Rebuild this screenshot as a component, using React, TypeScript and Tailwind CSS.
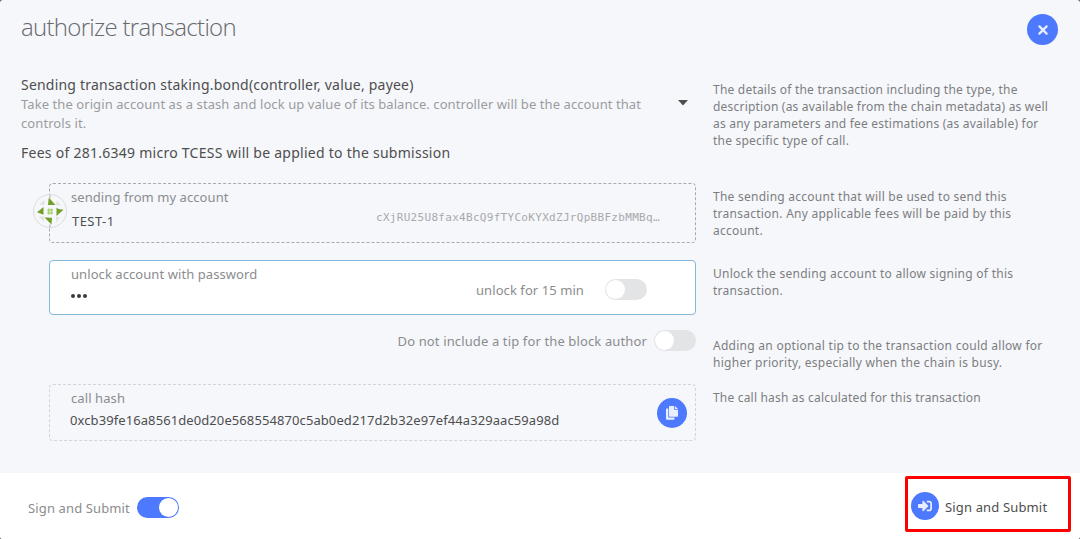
import type { ReactNode } from 'react';

function Toggle({ on = false }: { on?: boolean }) {
  return (
    <button
      type="button"
      role="switch"
      aria-checked={on}
      className={
        on
          ? 'flex h-[21px] w-[42px] shrink-0 items-center justify-end rounded-full bg-[#4d79ff] p-px'
          : 'flex h-[21px] w-[42px] shrink-0 items-center justify-start rounded-full bg-[#e3e4e6] p-px'
      }
    >
      <span className="size-[19px] rounded-full bg-white" />
    </button>
  );
}

function Help({ className, lines }: { className: string; lines: string[] }) {
  return (
    <div className={`ml-[17px] flex-1 whitespace-nowrap text-[12px] leading-[17px] text-[#7d7e80] ${className}`}>
      {lines.map((line) => (
        <div key={line}>{line}</div>
      ))}
    </div>
  );
}

function Row({ className, children }: { className: string; children: ReactNode }) {
  return <div className={`flex items-start ${className}`}>{children}</div>;
}

function Identicon() {
  return (
    <svg viewBox="0 0 34 34" className="absolute -left-[17px] top-[10px] size-[34px]">
      <circle cx="17" cy="17" r="16.5" fill="#f5f7fb" stroke="#dcdcdd" />
      <path d="M17 1v3M17 30.500v3" stroke="#a9aaac" />
      <g fill="#e1e5e1">
        <path d="M11.500 5.500v5.500L6.500 10.500zM28.500 11.500l-5.500-.5.500-4.500zM23 28.500v-6l4 1zM5.500 22.500h5.500L11 27.500z" />
      </g>
      <g fill="#739f2b">
        <path d="M15.800 3.500L22.500 11h-7.500zM30.500 15.800L23.500 22v-8.500l2 1.500zM18.500 30.500L11.500 23.500l7.500.200zM4 18.200L10.500 13v7.800z" />
      </g>
      <g fill="none" stroke="#a8d46f" strokeWidth="1.300">
        <path d="M15.700 14.500v6M18.500 14.500v6M14.300 16h5.600M14.300 19h5.600" />
      </g>
    </svg>
  );
}

export default function App() {
  return (
    <div className="h-[539px] w-[1080px] overflow-hidden bg-[#5e5e60]">
      <div className="flex h-full flex-col overflow-hidden rounded-[3px] bg-[#f5f7fb] font-['Noto_Sans',sans-serif] text-[#4e4e4e]">
        <header className="flex h-[72px] shrink-0 items-start justify-between pl-[21px] pr-[22px]">
          <h1 className="mt-[9px] whitespace-nowrap font-['Open_Sans',sans-serif] text-[24px] font-light leading-[36px] tracking-[-0.7px] text-[#68696b]">
            authorize transaction
          </h1>
          <button type="button" aria-label="Close" className="mt-[14px] flex size-[31px] items-center justify-center rounded-full bg-[#4d79ff]">
            <svg viewBox="0 0 12 12" className="size-[12px]" fill="none" stroke="#e8edff" strokeWidth="2.3" strokeLinecap="round">
              <path d="M2.400 2.400l7.200 7.200M9.600 2.400l-7.200 7.200" />
            </svg>
          </button>
        </header>

        <main className="h-[401px] shrink-0 pl-[21px]">
          <Row className="h-[111px]">
            <div className="w-[675px] shrink-0">
              <div className="flex justify-between">
                <div className="whitespace-nowrap pt-[3px]">
                  <div className="text-[14px] leading-[20px] tracking-[0.21px]">Sending transaction staking.bond(controller, value, payee)</div>
                  <div className="text-[13px] leading-[19px] tracking-[0.08px] text-[#9b9c9e]">
                    <div>Take the origin account as a stash and lock up value of its balance. controller will be the account that</div>
                    <div>controls it.</div>
                  </div>
                </div>
                <svg viewBox="0 0 10 6" className="mr-[8px] mt-[28px] h-[6px] w-[10px]" fill="#4e4e4e">
                  <path d="M0 0h10L5 5.500z" />
                </svg>
              </div>
              <div className="mt-[10px] whitespace-nowrap text-[14px] leading-[20px] tracking-[0.26px]">
                Fees of 281.6349 micro TCESS will be applied to the submission
              </div>
            </div>
            <Help
              className="pt-[9px] tracking-[0.21px]"
              lines={[
                'The details of the transaction including the type, the',
                'description (as available from the chain metadata) as well',
                'as any parameters and fee estimations (as available) for',
                'the specific type of call.',
              ]}
            />
          </Row>

          <Row className="h-[77px]">
            <section className="relative ml-[28px] h-[60px] w-[647px] shrink-0 rounded-[4px] border border-dashed border-[#a9aaac] pl-[21px]">
              <Identicon />
              <div className="mt-[3px] whitespace-nowrap text-[13px] leading-[20px] tracking-[0.07px] text-[#8b8c8e]">sending from my account</div>
              <div className="mt-[4px] flex items-center whitespace-nowrap leading-[20px]">
                <span className="ml-px w-[304px] text-[13px] tracking-[0.45px]">TEST-1</span>
                <span className="-mt-[6px] font-['DejaVu_Sans_Mono',monospace] text-[11px] tracking-[0.3px] text-[#a8a9ab]">
                  cXjRU25U8fax4BcQ9fTYCoKYXdZJrQpBBFzbMMBq…
                </span>
              </div>
            </section>
            <Help
              className="pt-[5px] tracking-[0.25px]"
              lines={[
                'The sending account that will be used to send this',
                'transaction. Any applicable fees will be paid by this',
                'account.',
              ]}
            />
          </Row>

          <Row className="h-[70px]">
            <section className="ml-[28px] flex h-[55px] w-[647px] shrink-0 rounded-[4px] border border-[#85b7d9] bg-white pl-[21px]">
              <div className="w-[405px]">
                <div className="mt-[3px] whitespace-nowrap text-[13px] leading-[20px] tracking-[0.07px] text-[#8b8c8e]">unlock account with password</div>
                <div className="mt-[10px] flex gap-[2px]">
                  <span className="size-[4px] rounded-full bg-[#3c3c3c]" />
                  <span className="size-[4px] rounded-full bg-[#3c3c3c]" />
                  <span className="size-[4px] rounded-full bg-[#3c3c3c]" />
                </div>
              </div>
              <div className="mt-[18px] flex h-[21px] items-center">
                <span className="w-[129px] whitespace-nowrap text-[13px] leading-[20px] tracking-[0.07px] text-[#8b8c8e]">unlock for 15 min</span>
                <Toggle />
              </div>
            </section>
            <Help className="pt-[5px] tracking-[0.27px]" lines={['Unlock the sending account to allow signing of this', 'transaction.']} />
          </Row>

          <Row className="h-[54px]">
            <div className="flex h-[21px] w-[675px] shrink-0 items-center justify-end gap-[7px]">
              <span className="whitespace-nowrap text-[13px] leading-[20px] tracking-[0.13px] text-[#8b8c8e]">Do not include a tip for the block author</span>
              <Toggle />
            </div>
            <Help
              className="pt-[7px] tracking-[0.27px]"
              lines={['Adding an optional tip to the transaction could allow for', 'higher priority, especially when the chain is busy.']}
            />
          </Row>

          <Row className="h-[89px]">
            <section className="ml-[28px] flex h-[57px] w-[647px] shrink-0 items-center justify-between rounded-[4px] border border-dashed border-[#d3d4d6] pl-[21px] pr-[8px]">
              <div className="mb-[8px] whitespace-nowrap text-[13px] leading-[20px] tracking-[0.09px]">
                <div className="text-[#8b8c8e]">call hash</div>
                <div className="-ml-px mt-[2px]">0xcb39fe16a8561de0d20e568554870c5ab0ed217d2b32e97ef44a329aac59a98d</div>
              </div>
              <button type="button" aria-label="Copy" className="flex size-[30px] items-center justify-center rounded-full bg-[#4d79ff]">
                <svg viewBox="0 0 14 14" className="size-[14px]" fill="#e8edff">
                  <path d="M1.800 2.500H3.300v8.500c0 .3.200.5.500.5H9.500v1c0 .8-.4 1.300-1.200 1.300H2.200c-.8 0-1.200-.5-1.200-1.300V3.500c0-.6.300-1 .8-1z" />
                  <path d="M5 0h4.200v3.700H13v6c0 .6-.4 1-1 1H5c-.6 0-1-.4-1-1V1c0-.6.400-1 1-1z" />
                  <path d="M10 0l3 2.900h-3z" />
                </svg>
              </button>
            </section>
            <Help className="pt-[5px] tracking-[0.19px]" lines={['The call hash as calculated for this transaction']} />
          </Row>
        </main>

        <footer className="flex flex-1 items-start justify-between bg-white pl-[28px] pr-[9px]">
          <div className="mt-[24px] flex h-[21px] items-center gap-[7px]">
            <span className="whitespace-nowrap text-[13px] leading-[20px] tracking-[0.13px] text-[#8b8c8e]">Sign and Submit</span>
            <Toggle on />
          </div>
          <div className="mt-[3px] flex h-[56px] w-[166px] rounded-[2px] border-3 border-[#ff0000] pl-[3px] pt-[13px]">
            <button type="button" className="flex h-[28px] items-center gap-[6px] whitespace-nowrap text-[13px] leading-[20px] tracking-[0.15px]">
              <span className="flex size-[28px] items-center justify-center rounded-full bg-[#4d79ff]">
                <svg viewBox="0 0 512 512" className="size-[14px]" fill="#e8edff">
                  <path d="M416 448h-84c-6.600 0-12-5.400-12-12v-40c0-6.600 5.400-12 12-12h84c17.700 0 32-14.300 32-32V160c0-17.700-14.300-32-32-32h-84c-6.600 0-12-5.400-12-12V76c0-6.600 5.400-12 12-12h84c53 0 96 43 96 96v192c0 53-43 96-96 96zm-47-209L201 71c-15-15-41-4.500-41 17v96H24c-13.300 0-24 10.700-24 24v96c0 13.300 10.700 24 24 24h136v96c0 21.500 26 32 41 17l168-168c9.300-9.400 9.300-24.600 0-34z" />
                </svg>
              </span>
              <span className="pt-[2px]">Sign and Submit</span>
            </button>
          </div>
        </footer>
      </div>
    </div>
  );
}
